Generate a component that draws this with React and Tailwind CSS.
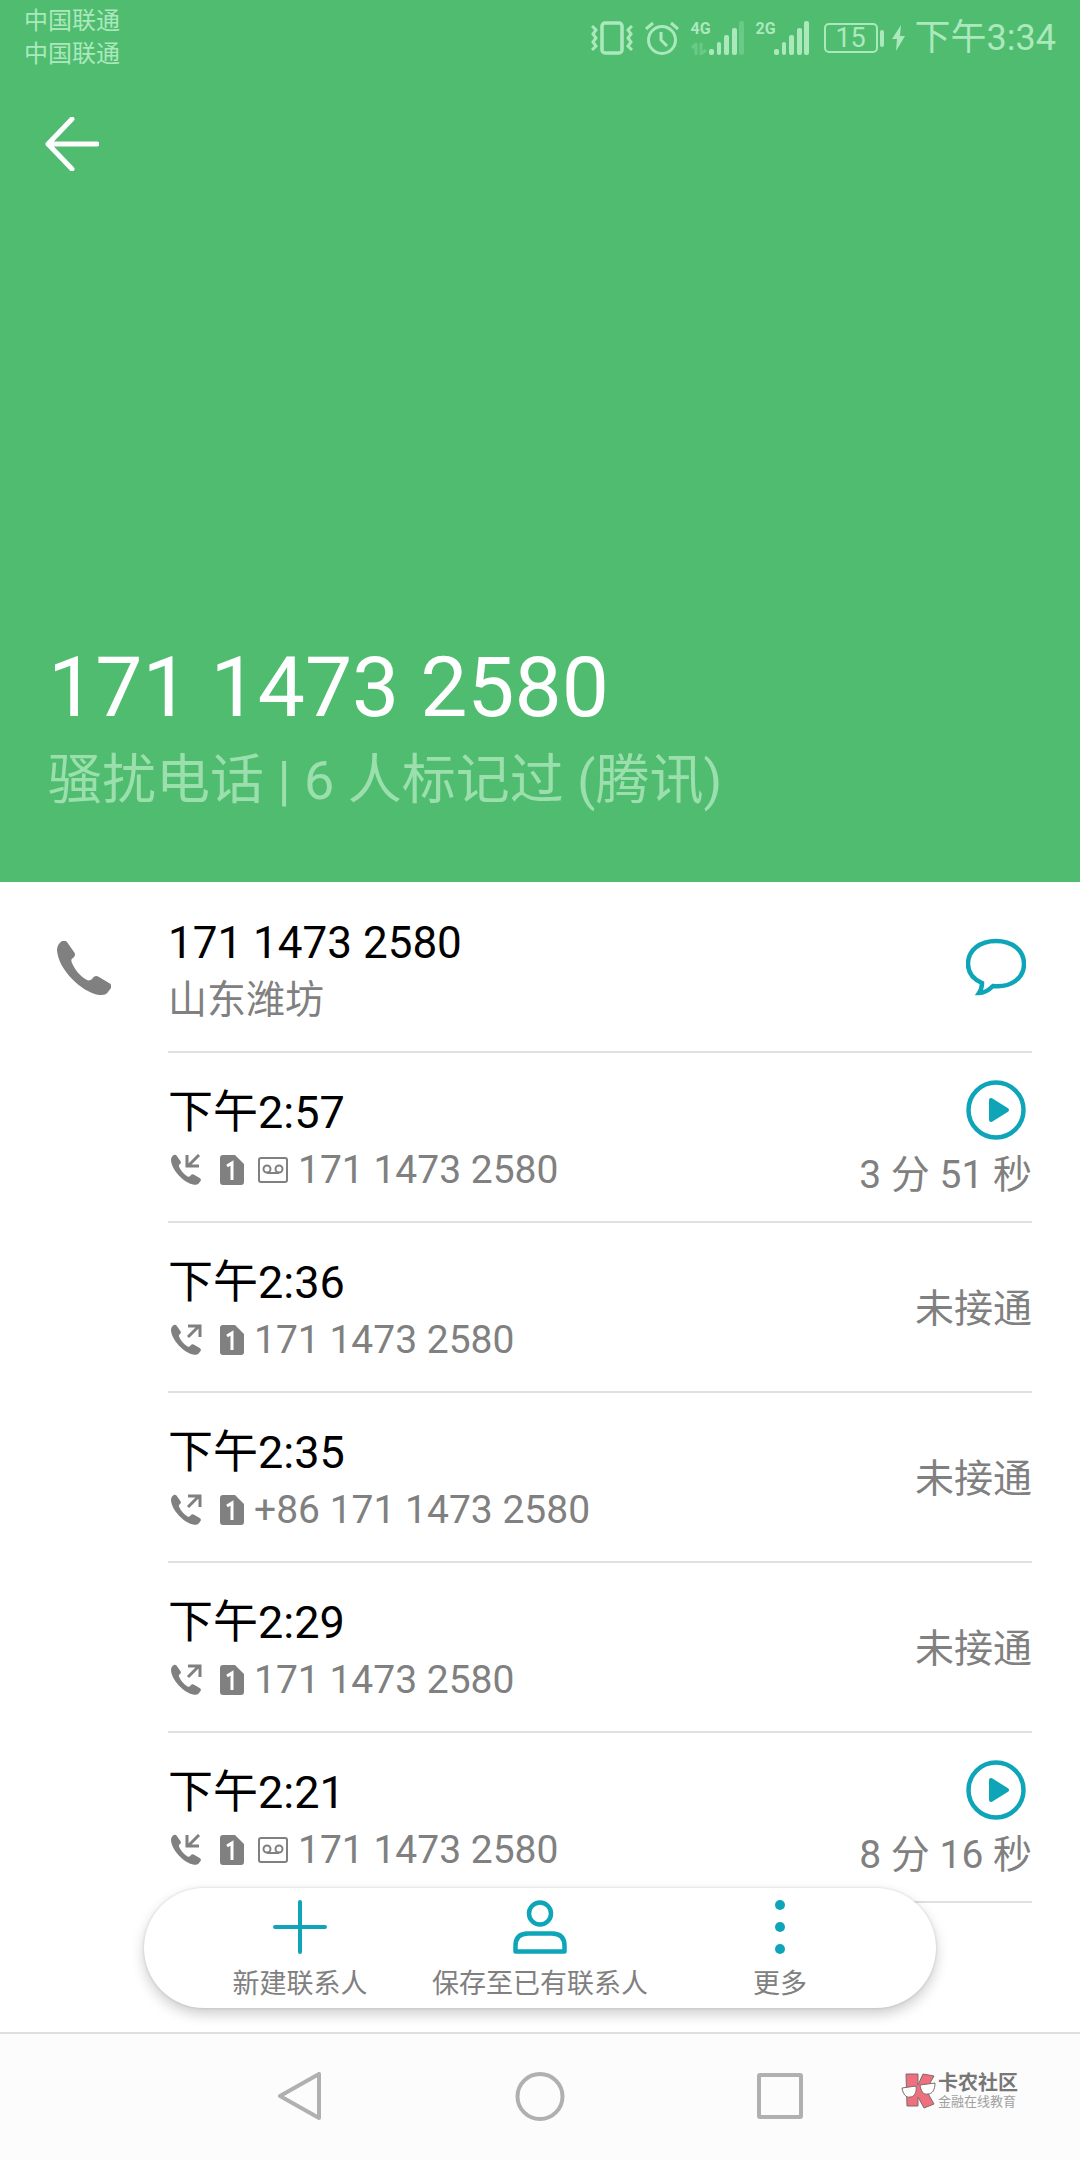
import React from 'react';

const phonePath =
  'M5 0C7 -1 9 0 10 1L17 11C19 14 18 15 16 17C14 18 14 20 15 22C18 29 23 35 30 39C32 40 34 39 35 38C37 35 39 34 42 36L52 42C54 43 55 45 54 47L51 51C49 54 46 54 42 54C24 51 1 28 0 9C0 5 2 2 5 0Z';

const calls = [
  { time: '下午2:57', number: '171 1473 2580', incoming: true, duration: '3 分 51 秒' },
  { time: '下午2:36', number: '171 1473 2580', incoming: false },
  { time: '下午2:35', number: '+86 171 1473 2580', incoming: false },
  { time: '下午2:29', number: '171 1473 2580', incoming: false },
  { time: '下午2:21', number: '171 1473 2580', incoming: true, duration: '8 分 16 秒' },
];

const VibrateIcon = () => (
  <svg width="42" height="34" viewBox="0 0 42 34" fill="none" stroke="currentColor" strokeWidth="3.5">
    <rect x="11" y="2" width="20" height="30" rx="3" />
    <path d="M1 5L5 9L2 13L5 17L2 21L5 25L1 29" strokeWidth="3" />
    <path d="M41 5L37 9L40 13L37 17L40 21L37 25L41 29" strokeWidth="3" />
  </svg>
);

const AlarmIcon = () => (
  <svg width="34" height="34" viewBox="0 0 34 34" fill="none" stroke="currentColor" strokeWidth="3">
    <circle cx="17" cy="19" r="13.5" />
    <path d="M16 11V19L22 25" />
    <path d="M1 8L8 2M33 8L26 2" />
  </svg>
);

const SignalBars = ({ weak }) => (
  <svg className="shrink-0" width="35" height="34" viewBox="0 0 35 34" fill="currentColor">
    <rect x="0" y="28" width="5" height="6" rx="2" />
    <rect x="8" y="21" width="4" height="13" rx="2" />
    <rect x="15" y="14" width="5" height="20" rx="2" />
    <rect x="23" y="7" width="5" height="27" rx="2" />
    <rect x="30" y="0" width="5" height="34" rx="2" opacity={weak ? 0.3 : 1} />
  </svg>
);

const Signal = ({ label, weak }) => (
  <div className="flex h-[34px]">
    <div className="flex w-[18px] flex-col justify-between">
      <span className="text-[16px] leading-[16px] font-bold">{label}</span>
      {weak && (
        <svg className="opacity-30" width="16" height="12" viewBox="0 0 16 12" fill="none" stroke="currentColor" strokeWidth="3">
          <path d="M1 5L5 1V12M15 7L10 11V0" />
        </svg>
      )}
    </div>
    <SignalBars weak={weak} />
  </div>
);

const StatusBar = () => (
  <div className="flex h-[76px] items-center justify-between px-6 text-[#abe9bd]">
    <div className="text-[24px] leading-[33px]">
      <p>中国联通</p>
      <p>中国联通</p>
    </div>
    <div className="flex items-center gap-3">
      <VibrateIcon />
      <AlarmIcon />
      <Signal label="4G" weak />
      <Signal label="2G" />
      <div className="ml-[3px] flex items-center gap-2">
        <div className="flex items-center gap-[2px]">
          <div className="flex h-[30px] w-[54px] items-center justify-center rounded-[5px] border-2 border-current text-[27px] leading-[26px]">
            15
          </div>
          <div className="h-[17px] w-[4px] rounded-[2px] bg-current" />
        </div>
        <svg width="13" height="26" viewBox="0 0 13 26" fill="currentColor">
          <path d="M9 0L0 14H5L4 26L13 11H8Z" />
        </svg>
        <span className="ml-[2px] text-[36px] leading-[52px]">下午3:34</span>
      </div>
    </div>
  </div>
);

const CallIcon = ({ incoming }) => (
  <svg width="34" height="32" viewBox="0 0 34 32" fill="none">
    <g transform="translate(3 1) scale(0.55)">
      <path d={phonePath} fill="currentColor" />
    </g>
    {incoming ? (
      <path d="M31 1L20 12M19 1V12H31" stroke="currentColor" strokeWidth="3" />
    ) : (
      <path d="M20 13L31 2M20 2H32V13" stroke="currentColor" strokeWidth="3" />
    )}
  </svg>
);

const SimIcon = () => (
  <svg width="24" height="30" viewBox="0 0 24 30">
    <path d="M3 0H15L24 9V27Q24 30 21 30H3Q0 30 0 27V3Q0 0 3 0Z" fill="currentColor" />
    <path d="M7 11L12 8V25" fill="none" stroke="#fff" strokeWidth="3" />
  </svg>
);

const VoicemailIcon = () => (
  <svg width="30" height="26" viewBox="0 0 30 26" fill="none" stroke="currentColor" strokeWidth="2">
    <rect x="1" y="1" width="28" height="24" rx="2" />
    <circle cx="9" cy="12" r="3.5" />
    <circle cx="21" cy="12" r="3.5" />
    <path d="M9 16H21" />
  </svg>
);

const PlayIcon = () => (
  <svg width="60" height="60" viewBox="0 0 60 60">
    <circle cx="30" cy="30" r="27.5" fill="none" stroke="currentColor" strokeWidth="4.5" />
    <path d="M25 20V40L41 30Z" fill="currentColor" stroke="currentColor" strokeWidth="4" strokeLinejoin="round" />
  </svg>
);

const CallRow = ({ call }) => (
  <li className="flex justify-between border-b-2 border-[#e0e0e0]">
    <div className="pt-[30px] pb-6">
      <p className="text-[45px] leading-[60px] text-black">{call.time}</p>
      <div className="flex items-center text-[39px] leading-[54px] text-[#808080]">
        <CallIcon incoming={call.incoming} />
        <span className="ml-[18px]">
          <SimIcon />
        </span>
        {call.duration && (
          <span className="ml-[14px]">
            <VoicemailIcon />
          </span>
        )}
        <span className="ml-[10px]">{call.number}</span>
      </div>
    </div>
    {call.duration ? (
      <div className="flex flex-col items-end gap-2 pt-[27px]">
        <button type="button" aria-label="播放录音" className="mr-[6px] text-[#0ea5b8]">
          <PlayIcon />
        </button>
        <p className="text-[39px] leading-[54px] text-[#808080]">{call.duration}</p>
      </div>
    ) : (
      <p className="self-center pt-1 text-[39px] leading-[54px] text-[#808080]">未接通</p>
    )}
  </li>
);

const ActionButton = ({ label, children }) => (
  <button type="button" className="flex flex-1 flex-col items-center gap-[6px] text-[#0ea5b8]">
    {children}
    <span className="text-[27px] leading-[48px] whitespace-nowrap text-[#808080]">{label}</span>
  </button>
);

const ActionBar = () => (
  <div className="absolute inset-x-[144px] bottom-6 flex justify-center rounded-full bg-white px-9 pt-3 shadow-[0_6px_14px_rgba(0,0,0,0.2),0_0_3px_rgba(0,0,0,0.15)]">
    <ActionButton label="新建联系人">
      <svg width="54" height="54" viewBox="0 0 54 54" fill="none" stroke="currentColor" strokeWidth="4" strokeLinecap="round">
        <path d="M27 2V52M2 27H52" />
      </svg>
    </ActionButton>
    <ActionButton label="保存至已有联系人">
      <svg width="54" height="54" viewBox="0 0 54 54" fill="none" stroke="currentColor" strokeWidth="4.5">
        <circle cx="27" cy="13.5" r="11" />
        <path d="M2.5 51.5V46Q2.5 33.5 15 33.5H39Q51.5 33.5 51.5 46V51.5Z" strokeLinejoin="round" />
      </svg>
    </ActionButton>
    <ActionButton label="更多">
      <svg width="54" height="54" viewBox="0 0 54 54" fill="currentColor">
        <circle cx="27" cy="5" r="5" />
        <circle cx="27" cy="27" r="5" />
        <circle cx="27" cy="49" r="5" />
      </svg>
    </ActionButton>
  </div>
);

const NavBar = () => (
  <nav className="relative flex h-32 items-center justify-center border-t-2 border-[#dedede] bg-[#fcfcfc] px-[180px] text-[#b0b0b0]">
    <button type="button" aria-label="返回" className="flex flex-1 justify-center">
      <svg width="50" height="50" viewBox="0 0 50 50" fill="none" stroke="currentColor" strokeWidth="4" strokeLinejoin="round">
        <path d="M44 2V46L5 24Z" />
      </svg>
    </button>
    <button type="button" aria-label="主屏幕" className="flex flex-1 justify-center">
      <svg width="50" height="50" viewBox="0 0 50 50" fill="none" stroke="currentColor" strokeWidth="4">
        <circle cx="25" cy="24.5" r="22.5" />
      </svg>
    </button>
    <button type="button" aria-label="最近任务" className="flex flex-1 justify-center">
      <svg width="50" height="50" viewBox="0 0 50 50" fill="none" stroke="currentColor" strokeWidth="4">
        <rect x="4" y="3" width="42" height="42" rx="1" />
      </svg>
    </button>

    {/* Community badge */}
    <div className="absolute right-[62px] bottom-[51px] flex items-center gap-px">
      <svg width="36" height="36" viewBox="0 0 36 36" stroke="#7c6b6d" strokeWidth="1">
        <path d="M5 1H17V12L22 1L33 3L25 17L33 31L23 35L17 24V33H6Z" fill="#ee6f7d" />
        <path d="M1 15L15 13C16 20 13 24 9 24C5 25 2 21 1 15Z" fill="#fff" />
        <path d="M19 12L34 10C34 17 31 21 27 21C22 22 20 18 19 12Z" fill="#fff" />
      </svg>
      <div>
        <p className="text-[20px] leading-[21px] font-bold text-[#777777]">卡农社区</p>
        <p className="text-[13px] leading-[15px] text-[#a0a0a0]">金融在线教育</p>
      </div>
    </div>
  </nav>
);

const App = () => {
  return (
    <div className="flex min-h-screen flex-col bg-white font-['Roboto','Noto_Sans_CJK_SC',sans-serif]">
      <header className="flex min-h-[882px] flex-col bg-[#4fbc70]">
        <StatusBar />
        <div className="flex h-[136px] items-center px-[45px]">
          <button type="button" aria-label="返回" className="text-white">
            <svg width="54" height="54" viewBox="0 0 54 54" fill="none" stroke="currentColor" strokeWidth="5" strokeLinecap="round" strokeLinejoin="round">
              <path d="M27 2L3 27L27 52M3 27H52" />
            </svg>
          </button>
        </div>
        <div className="mt-auto px-12 pb-14">
          <h1 className="text-[84px] leading-[96px] text-white">171 1473 2580</h1>
          <p className="text-[54px] leading-[90px] text-[#9bdfad]">骚扰电话 | 6 人标记过 (腾讯)</p>
        </div>
      </header>

      <main className="relative flex-1 pr-12">
        <div className="flex">
          <div className="flex w-[168px] shrink-0 items-center pl-[57px] text-[#808080]">
            <svg width="54" height="54" viewBox="0 0 54 54" fill="currentColor">
              <path d={phonePath} />
            </svg>
          </div>
          <div className="flex flex-1 items-center justify-between border-b-2 border-[#e0e0e0]">
            <div className="pt-[31px] pb-6">
              <p className="text-[44px] leading-[60px] text-black">171 1473 2580</p>
              <p className="text-[39px] leading-[54px] text-[#808080]">山东潍坊</p>
            </div>
            <button type="button" aria-label="发送信息" className="mr-[6px] text-[#0ea5b8]">
              <svg width="60" height="60" viewBox="0 0 60 60" fill="none" stroke="currentColor" strokeWidth="4.5">
                <path d="M13 56C15 53 16 50 16 46C7 42 2 35 2 27C2 13 14 4 30 4C46 4 58 13 58 27C58 41 45 51 27 49C23 53 19 56 13 56Z" />
              </svg>
            </button>
          </div>
        </div>

        <ul className="ml-[168px]">
          {calls.map((call) => (
            <CallRow key={call.time} call={call} />
          ))}
        </ul>

        <ActionBar />
      </main>

      <NavBar />
    </div>
  );
};

export default App;
